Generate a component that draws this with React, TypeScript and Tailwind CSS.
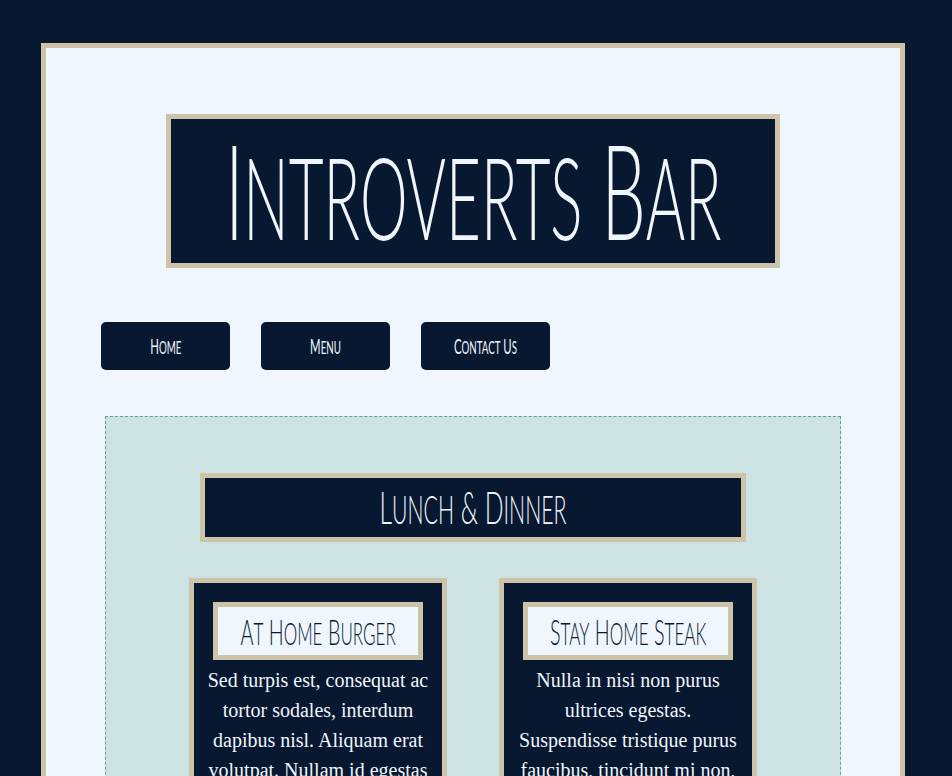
const dishes = [
  {
    name: 'At Home Burger',
    text: 'Sed turpis est, consequat ac tortor sodales, interdum dapibus nisl. Aliquam erat volutpat. Nullam id egestas lorem, ut tempor massa.',
  },
  {
    name: 'Stay Home Steak',
    text: 'Nulla in nisi non purus ultrices egestas. Suspendisse tristique purus faucibus, tincidunt mi non, laoreet lorem.',
  },
];

// fake "Amatic SC" look: first letter full size, the rest as smaller capitals, squeezed
function Caps({ text, className }: { text: string; className: string }) {
  const words = text.split(' ');
  return (
    <span
      className={`inline-block shrink-0 whitespace-nowrap font-['Lato',sans-serif] ${className}`}
    >
      {words.map((w, i) => (
        <span key={i}>
          {i > 0 ? ' ' : ''}
          {w[0]}
          <span className="text-[0.86em] uppercase">{w.slice(1)}</span>
        </span>
      ))}
    </span>
  );
}

export default function App() {
  return (
    <div className="min-h-[776px] bg-[#071830] pt-[43px] pl-[41px]">
      <div className="w-[864px] border-[5px] border-[#ccc3a9] bg-[#eff6fd] pt-[66px] pb-10">
        {/* Header */}
        <div className="mx-auto flex h-[154px] w-[614px] items-center justify-center border-[5px] border-[#ccc3a9] bg-[#071830] pb-[4px]">
          <Caps
            text="Introverts Bar"
            className="scale-x-[0.53] text-[132px] font-light leading-none text-[#eff6fd]"
          />
        </div>

        {/* Nav */}
        <nav className="mt-[54px] flex gap-[31px] pl-[55px]">
          {['Home', 'Menu', 'Contact Us'].map((item) => (
            <a
              key={item}
              href="#"
              className="flex h-[48px] w-[129px] items-center justify-center rounded-[5px] bg-[#071830]"
            >
              <Caps
                text={item}
                className="scale-x-[0.54] text-[21px] font-normal leading-none text-[#eff6fd]"
              />
            </a>
          ))}
        </nav>

        {/* Menu section */}
        <section className="mx-auto mt-[46px] w-[736px] border border-dashed border-[#5fa68c] bg-[#cce2e3] pt-[56px] pb-10">
          <div className="mx-auto flex h-[69px] w-[546px] items-center justify-center border-[5px] border-[#ccc3a9] bg-[#071830]">
            <Caps
              text="Lunch & Dinner"
              className="scale-x-[0.55] text-[45px] font-light leading-none text-[#eff6fd]"
            />
          </div>

          <div className="mt-[36px] flex justify-center gap-[52px]">
            {dishes.map((d) => (
              <div
                key={d.name}
                className="w-[258px] border-[5px] border-[#ccc3a9] bg-[#071830] px-[13px] pt-[19px] pb-6"
              >
                <div className="mx-auto flex h-[58px] w-[210px] items-center justify-center border-[5px] border-[#ccc3a9] bg-[#eff6fd]">
                  <Caps
                    text={d.name}
                    className="scale-x-[0.55] text-[36px] font-light leading-none text-[#071830]"
                  />
                </div>
                <p className="mt-[5px] text-center font-['Liberation_Serif',serif] text-[20px] leading-[30px] text-[#eff6fd]">
                  {d.text}
                </p>
              </div>
            ))}
          </div>
        </section>
      </div>
    </div>
  );
}
